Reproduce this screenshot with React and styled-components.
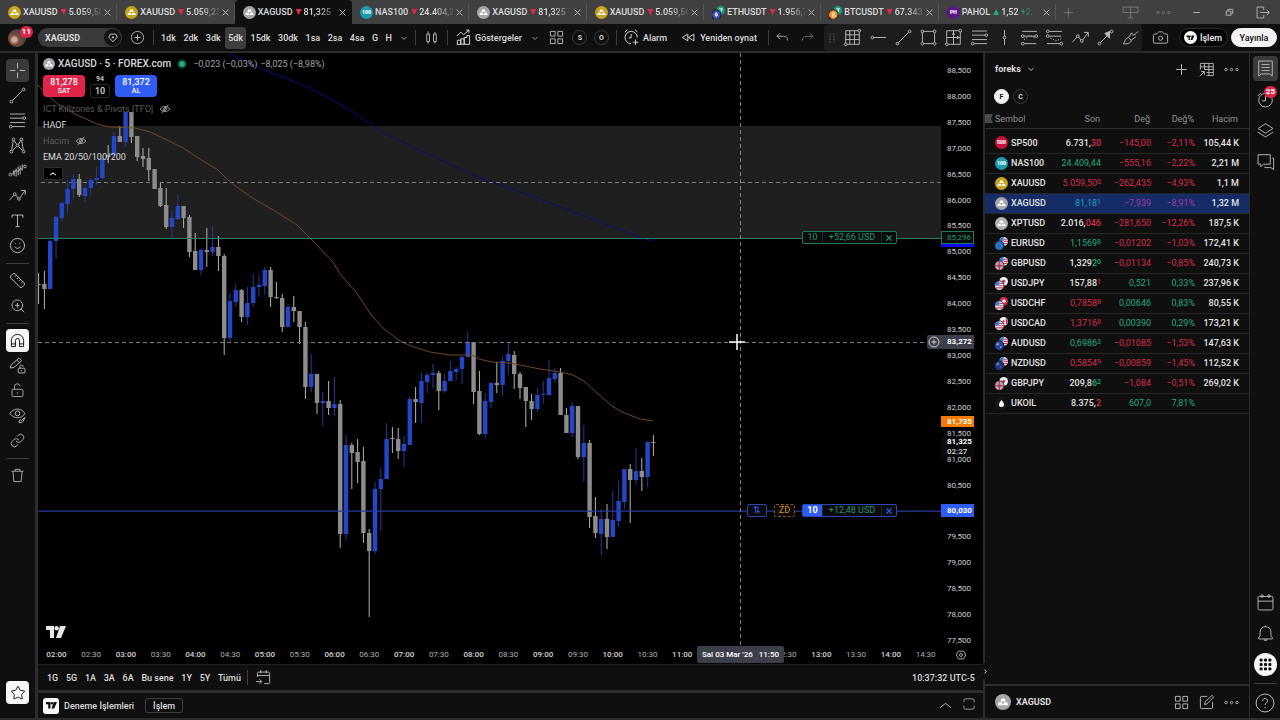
import React from 'react'
import styled, { createGlobalStyle } from 'styled-components'
import { Smile, Ruler, ZoomIn, Link, Star, Camera } from 'lucide-react'


const GlobalStyle = createGlobalStyle`
 * {
  box-sizing: border-box;
 }
 body {
  margin: 0;
  background-color: #2c2c2c;
  font-family: Roboto, "Noto Sans", sans-serif;
  font-size: 9px;
  line-height: 12px;
  color: #dbdbdb;
 }
 button {
  font: inherit;
  color: inherit;
  background: none;
  border: none;
  padding: 0;
  margin: 0;
  cursor: pointer;
 }
 svg {
  display: block;
  flex: none;
 }
`

const Page = styled.div`
 display: flex;
 flex-direction: column;
 height: 100vh;
 background-color: #2c2c2c;
`

/* ---------- browser style tabs ---------- */

const TabStrip = styled.div`
 display: flex;
 height: 24px;
 flex: none;
 background-color: #404040;
`
const Tabs = styled.div`
 display: grid;
 grid-template-columns: repeat(9, 1fr);
 flex: 0 0 82.5%;
`
const Tab = styled.div`
 display: flex;
 align-items: center;
 gap: 2px;
 min-width: 0;
 padding: 0 5px 0 8px;
 border-radius: 4px 4px 0 0;
 background-color: ${({ $active }) => ($active ? '#0f0f0f' : 'transparent')};
 background-image: ${({ $active }) => ($active ? 'none' : 'linear-gradient(#555, #555)')};
 background-size: 1px 16px;
 background-position: right center;
 background-repeat: no-repeat;
`
const TabName = styled.span`
 font-size: 9px;
 font-weight: 500;
`
const Triangle = styled.span`
 flex: none;
 width: 6px;
 height: 6px;
 margin: 0 0 0 1px;
 background-color: ${({ $up }) => ($up ? '#22ab7f' : '#e0284c')};
 clip-path: ${({ $up }) => ($up ? 'polygon(50% 0, 100% 100%, 0 100%)' : 'polygon(0 0, 100% 0, 50% 100%)')};
`
const TabPrice = styled.span`
 flex: 1;
 min-width: 0;
 overflow: hidden;
 white-space: nowrap;
 font-weight: 500;
 mask-image: linear-gradient(90deg, #000 40%, transparent 110%);
`
const WindowTools = styled.div`
 display: flex;
 flex: 1;
 align-items: center;
 justify-content: space-between;
 padding: 0 8px 0 3px;
 color: #a8a8a8;
`
const ToolCluster = styled.div`
 display: flex;
 align-items: center;
 gap: 14px;
`

/* ---------- top toolbar ---------- */

const Toolbar = styled.header`
 display: flex;
 height: 27px;
 flex: none;
 margin-bottom: 2px;
 background-color: #0f0f0f;
`
const Section = styled.div`
 display: flex;
 align-items: center;
 flex: none;
 width: ${({ $width }) => $width}px;
 padding: 0 ${({ $pad }) => $pad || 5}px;
 gap: ${({ $gap }) => $gap || 0}px;
 justify-content: ${({ $between }) => ($between ? 'space-between' : 'flex-start')};
 background-image: ${({ $line }) => ($line ? 'linear-gradient(#3d3d3d, #3d3d3d)' : 'none')};
 background-size: 1px 15px;
 background-position: left center;
 background-repeat: no-repeat;
`
const Avatar = styled.div`
 position: relative;
 width: 18px;
 height: 18px;
 margin: 0 12px 0 3px;
 border-radius: 50%;
 background: radial-gradient(circle at 35% 60%, #c9aa9c 0 14%, #7c4a3c 30%, #4b453e 60%, #6d4437 100%);
`
const Badge = styled.span`
 position: absolute;
 right: ${({ $right }) => $right}px;
 top: ${({ $top }) => $top}px;
 min-width: 12px;
 padding: 0 2px;
 border-radius: 6px;
 background-color: #e0244a;
 color: #fff;
 font-size: 8px;
 line-height: 12px;
 font-weight: 700;
 text-align: center;
`
const SymbolSearch = styled.button`
 display: flex;
 align-items: center;
 justify-content: space-between;
 width: 84px;
 height: 19px;
 padding: 0 1px 0 7px;
 margin-right: 6px;
 border-radius: 10px;
 background-color: #3a3a3a;
 font-weight: 700;
 text-align: left;
`
const Gem = styled.span`
 display: flex;
 align-items: center;
 justify-content: center;
 width: 17px;
 height: 17px;
 border-radius: 50%;
 background-color: #141414;
`
const Intervals = styled.div`
 display: flex;
 justify-content: space-between;
 width: 237px;
 margin-right: 4px;
`
const Interval = styled.button`
 height: 22px;
 padding: 0 3px;
 border-radius: 3px;
 font-weight: 500;
 background-color: ${({ $active }) => ($active ? '#3d3d3d' : 'transparent')};
`
const IconButton = styled.button`
 display: flex;
 align-items: center;
 justify-content: center;
 width: ${({ $size }) => $size || 19}px;
 height: ${({ $size }) => $size || 19}px;
 color: ${({ $dim }) => ($dim ? '#777' : '#b8b8b8')};
`
const LabelButton = styled.button`
 display: flex;
 align-items: center;
 gap: 2px;
 height: 19px;
 font-weight: 500;
 white-space: nowrap;
`
const Letter = styled.button`
 width: 15px;
 height: 15px;
 border-radius: 50%;
 border: 1px solid ${({ $solid }) => ($solid ? '#f2f2f2' : '#3d3d3d')};
 background-color: ${({ $solid }) => ($solid ? '#f2f2f2' : 'transparent')};
 color: ${({ $solid }) => ($solid ? '#0f0f0f' : '#dbdbdb')};
 font-size: 7px;
 line-height: 12px;
 font-weight: 700;
`
const Favorites = styled.div`
 display: flex;
 flex: 1;
 align-items: center;
 justify-content: space-between;
 min-width: 0;
 padding: 0 2px 0 3px;
 border-radius: 4px;
 background-color: #1c1c1c;
`
const Pill = styled.button`
 display: flex;
 align-items: center;
 justify-content: center;
 gap: 3px;
 width: ${({ $light }) => ($light ? 46 : 49)}px;
 height: 19px;
 border-radius: 10px;
 border: 1px solid ${({ $light }) => ($light ? '#f2f2f2' : '#2e2e2e')};
 background-color: ${({ $light }) => ($light ? '#f2f2f2' : '#000')};
 color: ${({ $light }) => ($light ? '#0f0f0f' : '#f2f2f2')};
 font-weight: 500;
`

/* ---------- body ---------- */

const Body = styled.div`
 display: grid;
 grid-template-columns: 35px minmax(0, 1fr) 265px 30px;
 flex: 1;
 min-height: 0;
 padding-bottom: 2px;
`
const Rail = styled.nav`
 display: flex;
 flex-direction: column;
 align-items: center;
 padding: ${({ $right }) => ($right ? '0' : '5px 0 13px')};
 background-color: #0f0f0f;
`
const RailButton = styled.button`
 position: relative;
 display: flex;
 align-items: center;
 justify-content: center;
 width: ${({ $tall }) => ($tall ? 30 : 35)}px;
 height: ${({ $tall }) => ($tall ? 31 : 25)}px;
 flex: none;
 color: ${({ $look }) => ($look === 'light' ? '#0f0f0f' : '#b8b8b8')};
`
const RailFace = styled.span`
 display: flex;
 align-items: center;
 justify-content: center;
 width: ${({ $wide }) => ($wide ? 25 : 23)}px;
 height: ${({ $wide }) => ($wide ? 25 : 23)}px;
 border-radius: ${({ $round }) => ($round ? '50%' : '4px')};
 background-color: ${({ $look }) => ({ light: '#f7f7f7', dark: '#3a3a3a' }[$look] || 'transparent')};
`
const RailLine = styled.div`
 width: 23px;
 height: 1px;
 margin: ${({ $tight }) => ($tight ? '3px 0' : '5px 0 4px')};
 flex: none;
 background-color: #3d3d3d;
`
const Spacer = styled.div`
 flex: 1;
`

const ChartColumn = styled.main`
 display: flex;
 flex-direction: column;
 margin: 0 2px 0 3px;
 min-width: 0;
`
const ChartGrid = styled.section`
 display: grid;
 grid-template-columns: minmax(0, 1fr) 42px;
 grid-template-rows: minmax(0, 1fr) 18px;
 flex: 1;
 min-height: 0;
 background-color: #000;
`
const Pane = styled.div`
 position: relative;
 min-width: 0;
 overflow: hidden;
`
const PaneSvg = styled.svg`
 position: absolute;
 inset: 0;
 width: 100%;
 height: 100%;
`
const Legend = styled.div`
 position: relative;
 display: flex;
 flex-direction: column;
 align-items: flex-start;
 padding: 4px 5px;
`
const LegendTitle = styled.div`
 display: flex;
 align-items: center;
 gap: 3px;
 height: 14px;
 font-size: 10px;
 line-height: 14px;
 font-weight: 500;
 white-space: nowrap;
`
const LiveDot = styled.span`
 width: 6px;
 height: 6px;
 margin: 0 5px;
 border-radius: 50%;
 background-color: #22ab7f;
 box-shadow: 0 0 0 2px #0d3327;
`
const Change = styled.span`
 font-size: 9px;
 font-weight: 400;
 color: #a3a3a3;
`
const Quote = styled.div`
 display: flex;
 gap: 5px;
 margin: 4px 0 3px;
`
const Trade = styled.button`
 width: 42px;
 height: 22px;
 border-radius: 4px;
 background-color: ${({ $buy }) => ($buy ? '#2f5cf2' : '#e0244a')};
 color: #fff;
 font-weight: 500;
 line-height: 10px;
`
const Small = styled.span`
 display: block;
 font-size: 7px;
 line-height: 9px;
`
const Lot = styled.div`
 display: flex;
 flex-direction: column;
 align-items: center;
 justify-content: space-between;
 width: 20px;
 font-weight: 500;
`
const LotBox = styled.button`
 width: 20px;
 height: 14px;
 border: 1px solid #2b2b2b;
 border-radius: 3px;
 background-color: #000;
`
const Study = styled.div`
 display: flex;
 align-items: center;
 gap: 6px;
 height: 16px;
 color: ${({ $hidden }) => ($hidden ? '#5c5c5c' : '#dbdbdb')};
`
const EyeOff = styled.button`
 color: #a8a8a8;
`
const Fold = styled.button`
 display: flex;
 align-items: center;
 justify-content: center;
 width: 20px;
 height: 13px;
 margin-top: 2px;
 border: 1px solid #2b2b2b;
 border-radius: 2px;
 background-color: #000;
`
const Order = styled.div`
 position: absolute;
 right: 44px;
 top: ${({ $top }) => $top}px;
 display: flex;
 gap: 7px;
 height: 13px;
 line-height: 11px;
`
const OrderBox = styled.div`
 display: flex;
 border: 1px ${({ $dashed }) => ($dashed ? 'dashed' : 'solid')} ${({ $color }) => $color};
 border-radius: 2px;
 background-color: #0b0b0b;
`
const OrderCell = styled.span`
 display: flex;
 align-items: center;
 justify-content: center;
 width: ${({ $width }) => $width}px;
 color: ${({ $color }) => $color};
 background-color: ${({ $fill }) => $fill || 'transparent'};
 font-weight: ${({ $fill }) => ($fill ? 700 : 400)};
 & + & {
  border-left: 1px solid #1b2633;
 }
`
const LogoMark = styled.div`
 position: absolute;
 left: 8px;
 bottom: 8px;
 color: #e6e6e6;
`
const PriceAxis = styled.div`
 position: relative;
 display: flex;
 flex-direction: column;
 justify-content: space-between;
 margin-bottom: -1px;
 padding: 12px 0 0 6px;
 font-size: 8px;
 color: #d0d0d0;
`
const Tag = styled.div`
 position: absolute;
 left: 0;
 top: ${({ $top }) => $top}px;
 width: 33px;
 padding-left: 6px;
 font-weight: ${({ $thin }) => ($thin ? 400 : 700)};
 line-height: ${({ $line }) => $line || 13}px;
 color: ${({ $color }) => $color || '#fff'};
 background-color: ${({ $fill }) => $fill};
 box-shadow: ${({ $ring }) => ($ring ? `inset 0 0 0 1px ${$ring}` : 'none')};
`
const AddAlert = styled.button`
 position: absolute;
 left: -14px;
 top: 282px;
 display: flex;
 align-items: center;
 justify-content: center;
 width: 14px;
 height: 14px;
 border-radius: 2px 0 0 2px;
 background-color: #3c3e49;
`
const TimeAxis = styled.div`
 position: relative;
 display: grid;
 grid-template-columns: repeat(26, 1fr);
 align-items: center;
 margin-right: -2px;
 padding-left: 1px;
 font-size: 8px;
 text-align: center;
`
const Hour = styled.span`
 color: ${({ $half }) => ($half ? '#b0b0b0' : '#d4d4d4')};
 font-weight: ${({ $half }) => ($half ? 400 : 500)};
`
const TimeTag = styled.div`
 position: absolute;
 left: 659px;
 top: 0;
 width: 87px;
 border-radius: 2px;
 background-color: #3c3e49;
 color: #fff;
 font-weight: 500;
 line-height: 17px;
 white-space: pre;
`
const Corner = styled.div`
 display: flex;
 align-items: center;
 padding-left: 14px;
 color: #c2c2c2;
`
const Bar = styled.div`
 display: flex;
 align-items: center;
 flex: none;
 height: ${({ $height }) => $height}px;
 padding: 0 ${({ $right }) => $right}px 0 ${({ $left }) => $left}px;
 margin-bottom: ${({ $gap }) => $gap || 0}px;
 border-top: ${({ $gap }) => ($gap ? '1px solid #1f1f1f' : 'none')};
 background-color: #0f0f0f;
 font-weight: 500;
`
const Ranges = styled.div`
 display: flex;
 justify-content: space-between;
 width: 194px;
 margin-right: 6px;
`
const Divider = styled.div`
 width: 1px;
 height: 15px;
 margin-right: 6px;
 background-color: #3d3d3d;
`
const Broker = styled.span`
 display: flex;
 align-items: center;
 justify-content: center;
 width: 16px;
 height: 16px;
 margin-right: 5px;
 border-radius: 3px;
 background-color: #f7f7f7;
 color: #0f0f0f;
`
const Outline = styled.button`
 width: 38px;
 height: 15px;
 margin-left: 11px;
 border: 1px solid #3d3d3d;
 border-radius: 3px;
 line-height: 12px;
`

/* ---------- watchlist ---------- */

const Side = styled.aside`
 position: relative;
 display: flex;
 flex-direction: column;
 min-width: 0;
 border-right: 1px solid #2c2c2c;
 background-color: #0f0f0f;
`
const SideHead = styled.div`
 display: flex;
 align-items: center;
 justify-content: space-between;
 height: 32px;
 padding: 0 8px 0 10px;
`
const SideTitle = styled.button`
 display: flex;
 align-items: center;
 gap: 4px;
 font-weight: 700;
`
const IconRow = styled.div`
 display: flex;
 gap: 6px;
`
const Lists = styled.div`
 display: flex;
 gap: 4px;
 padding: 4px 0 6px 9px;
`
const Table = styled.table`
 width: 100%;
 border-collapse: collapse;
 table-layout: fixed;
`
const Th = styled.th`
 height: 18px;
 padding: 0 ${({ $last }) => ($last ? 11 : 1)}px 0 0;
 font-weight: 400;
 text-align: right;
 color: #8f8f8f;
 width: ${({ $width }) => $width}px;
 border-bottom: 1px solid #2c2c2c;
 &:first-child {
  text-align: left;
 }
`
const ThSymbol = styled.span`
 display: flex;
 align-items: center;
 gap: 2px;
`
const Gap = styled.tr`
 height: 5px;
`
const Row = styled.tr`
 height: 20px;
 background-color: ${({ $active }) => ($active ? '#152c66' : 'transparent')};
`
const Td = styled.td`
 padding: 0 ${({ $last }) => ($last ? 10 : 0)}px 0 0;
 text-align: right;
 font-weight: ${({ $bold }) => ($bold ? 500 : 400)};
 color: ${({ $color }) => $color || '#e3e3e3'};
 border-bottom: 1px solid #262626;
 white-space: nowrap;
`
const SymbolCell = styled.div`
 display: flex;
 align-items: center;
 gap: 3px;
 padding-left: 10px;
 font-weight: 500;
`
const Tail = styled.span`
 color: ${({ $color }) => $color};
`
const Pip = styled.sup`
 font-size: 7px;
 line-height: 7px;
 vertical-align: 2px;
 color: ${({ $color }) => $color};
`
const Detail = styled.div`
 display: flex;
 align-items: center;
 justify-content: space-between;
 height: 32px;
 margin-top: auto;
 padding: 0 8px 0 10px;
 background-color: #0f0f0f;
 box-shadow: 0 -2px 0 #2c2c2c;
`
const DetailName = styled.div`
 display: flex;
 align-items: center;
 gap: 5px;
 font-weight: 700;
`
const Handle = styled.button`
 position: absolute;
 left: -2px;
 top: 610px;
 display: flex;
 align-items: center;
 width: 5px;
 height: 16px;
 border-radius: 0 3px 3px 0;
 background-color: #0f0f0f;
`

/* ---------- icons, all drawn on a 28 unit grid ---------- */

const Icon = ({ size = 19, children }) => (
    <svg width={size} height={size} viewBox="0 0 28 28" fill="none" stroke="currentColor" strokeWidth="1.4">
        {children}
    </svg>
)

const dot = (x, y, r = 2) => <circle key={`${x}-${y}`} cx={x} cy={y} r={r} />

const icons = {
    cross: <path d="M14 3v8M14 17v8M3 14h8M17 14h8" />,
    line: <>{dot(5, 23)}{dot(23, 5)}<path d="M6.5 21.5l15-15" /></>,
    fib: <>{dot(24, 10.5)}{dot(4, 23)}<path d="M3 4.5h22M3 10.5h19M3 17h22M6 23h19" /></>,
    pattern: <>{dot(5, 23)}{dot(8, 5)}{dot(14, 14)}{dot(20, 5)}{dot(23, 23)}
        <path d="M5.4 21L7.7 7M9.2 6.7l3.6 5.6M15.2 12.3l3.6-5.6M20.3 7l2.3 14M6.5 21.6l6-6M15.5 15.5l6 6" /></>,
    forecast: <>{dot(3.5, 20)}{dot(25, 8)}<path d="M6 19h2v-5M9 14v8M12 11v12M15 8v13M18 7v13M21 5v9M9 17l3-4 3 3 3-5 3 1" /></>,
    zigzag: <>{dot(10, 12)}{dot(16, 19)}<path d="M2 21l6.7-7.5M11.5 13.5l3 4M17.5 17.5L25 7M19 6.5h6.5V13" /></>,
    text: <path d="M6 10V6h16v4M14 6v17M11 23h6" />,
    magnet: <path d="M5 23v-9a9 9 0 0 1 18 0v9h-6v-9a3 3 0 0 0-6 0v9zM5 19h6M17 19h6" />,
    penLock: <><path d="M3.5 17.5l1-4L16 3l4 4L8.5 17zM13 6l4 4" /><rect x="15" y="18" width="10" height="7" rx="1" /><path d="M17.5 18v-2a2.5 2.5 0 0 1 5 0M20 21v1.5" /></>,
    lock: <><rect x="5" y="12" width="18" height="12" rx="2" /><path d="M9 12V8a4.5 4.5 0 0 1 9-1M14 17v2.5" /></>,
    eyeBrush: <><path d="M3 11c5-8.5 17-8.5 22 0-5 8.5-17 8.5-22 0z" /><circle cx="14" cy="11" r="3.5" /><path d="M16 24c0-3 2-4 4-3l5-4-3 6c-1 2-4 2-6 1z" /></>,
    trash: <path d="M4 7h20M10 7V4h8v3M6.5 7l1.5 17h12l1.5-17" />,
    plusCircle: <><circle cx="14" cy="14" r="9" /><path d="M14 9.5v9M9.5 14h9" /></>,
    chevron: <path d="M8 11.5l6 6 6-6" strokeWidth="1.8" />,
    chevronUp: <path d="M4 18l10-8 10 8" strokeWidth="1.8" />,
    foldUp: <path d="M4 18l10-8 10 8" strokeWidth="4" />,
    chevronRight: <path d="M8 4l12 10L8 24" strokeWidth="5" />,
    candles: <path d="M7 9h4v11H7zM9 5v4M9 20v3M17 9h4v11h-4zM19 6v3M19 20v3" />,
    indicators: <path d="M4 12l6-6 4 4 8-7M18 3h4v4M5 24v-6h5v6M10 24v-8h5v8M15 24v-10h4v-3h4v13H4" />,
    grid4: <path d="M5 5h7v7H5zM16 5h7v7h-7zM5 16h7v7H5zM16 16h7v7h-7z" strokeLinejoin="round" />,
    alarmAdd: <><path d="M22.5 14A9 9 0 1 0 13 23M13.5 9v5.5H10M4 6l4-3.5M19 2.5l4 3.5M20 17v8M16 21h8" /></>,
    rewind: <path d="M13 9v10l-8-5zM22 9v10l-8-5z" />,
    undo: <path d="M10 7l-5 5 5 5M5 12h11c4 0 6 2 6.5 7" />,
    redo: <path d="M18 7l5 5-5 5M23 12H12c-4 0-6 2-6.5 7" />,
    grip: <path d="M8 5h3M17 5h3M8 11h3M17 11h3M8 17h3M17 17h3M8 23h3M17 23h3" strokeWidth="2" />,
    fGrid: <>{dot(24, 4)}{dot(4, 24)}<path d="M4 22V4h18M24 6v18H6M10 4v20M17 4v20M4 10h20M4 17h20" /></>,
    fRay: <>{dot(5, 14)}<path d="M7 14h18" /></>,
    fRect: <>{dot(5, 5)}{dot(23, 5)}{dot(5, 23)}{dot(23, 23)}<path d="M7 5h14M7 23h14M5 7v14M23 7v14" /></>,
    fRange: <>{dot(24, 4)}{dot(4, 24)}<path d="M4 22V4h18M24 6v18H6M14 4v20M4 14h20M14 7l-2 3M14 7l2 3M22 14l-3-2M22 14l-3 2" /></>,
    fVert: <>{dot(14, 14)}<path d="M14 3v9M14 16v9" /></>,
    fLong: <>{dot(4, 12)}{dot(24, 12)}{dot(4, 23)}<path d="M3 5h22M6 12h16M6 23h18" /><path d="M6 17l8-6 8 3" strokeDasharray="2 2" /></>,
    fShort: <>{dot(4, 5)}{dot(4, 12)}{dot(24, 23)}<path d="M6 5h19M6 12h18M3 23h19" /><path d="M8 15l8 4 8-3" strokeDasharray="2 2" /></>,
    fArrow: <>{dot(5, 23)}{dot(23, 5)}<path d="M6.5 21.5l12-12" /><path d="M20 5l-7 3 7 7z" fill="currentColor" /></>,
    fBrush: <path d="M3 23c3 0 2-8 8-9l4 4c0 5-7 6-12 5zM11 14l5-7c1 5 3 5 9-2M15 18l7-5" />,
    layout: <><rect x="3" y="6" width="22" height="8" /><path d="M14 6v16M10 22h8" /></>,
    dots: <>{dot(5, 14)}{dot(14, 14)}{dot(23, 14)}</>,
    plus: <path d="M14 6v16M6 14h16" />,
    minus: <path d="M7 14h14" strokeWidth="2" />,
    restore: <path d="M7 11h10v9H7zM11 11V7h10v9h-4" strokeWidth="2" />,
    exit: <path d="M16 10V5H5v18h11v-5M10 14h15M21 9.5l4.5 4.5-4.5 4.5" />,
    close: <path d="M5 5l18 18M23 5L5 23" strokeWidth="3" />,
    cancel: <path d="M7 7l14 14M21 7L7 21" strokeWidth="3" />,
    gem: <path d="M8 5h12l4 7-10 11L4 12zM14 10v5M11.5 12.5h5" strokeWidth="2" />,
    eyeOff: <><path d="M3 14c5-8 17-8 22 0-5 8-17 8-22 0zM22 4L6 24" strokeWidth="2" /><circle cx="14" cy="14" r="3.5" strokeWidth="2" /></>,
    hexagon: <><path d="M8 5h12l5 9-5 9H8l-5-9z" strokeWidth="2" /><circle cx="14" cy="14" r="3.5" strokeWidth="2" /></>,
    goTo: <path d="M5 13V8q0-2 2-2h14q2 0 2 2v13q0 2-2 2h-6M5 11h18M10 3v5M18 3v5M3 20h8M8 16.5l3.5 3.5L8 23.5" />,
    expand: <path d="M5 11V8q0-3 3-3h12q3 0 3 3v3M5 17v3q0 3 3 3h12q3 0 3-3v-3" />,
    tableAdd: <path d="M5 14V5h19v18H14M5 10h19M11 5v9M17.5 5v18M11 14h13M14 18.5h10M4 24l7-7M6 17h5v5" />,
    edit: <path d="M15 5H7q-2 0-2 2v14q0 2 2 2h14q2 0 2-2v-8M11 17l1-4L22 3.5l2.5 2.5L15 16z" />,
    list: <path d="M4 3h20v22l-4-3h-12l-4 3zM8 8h12M8 12.5h12M8 17h12" />,
    alarm: <><circle cx="14" cy="15" r="10" /><path d="M14 9v7H9M2.5 9l5-5" /></>,
    layers: <path d="M3 11l11-7 11 7-11 7zM3 16.5l11 7 11-7" />,
    chat: <path d="M3 4h18v14H11l-4 4v-4H3zM24 9h2v17l-4-3h-9v-1.5" />,
    calendar: <><rect x="3" y="5" width="22" height="20" rx="2" /><path d="M3 12h22" /><circle cx="9" cy="4.5" r="1.8" /><circle cx="19" cy="4.5" r="1.8" /></>,
    bell: <path d="M4 22h20v-2l-2-3v-5c0-5-3-8-8-8s-8 3-8 8v5l-2 3zM12 22v2h4v-2M14 4V2" />,
    apps: <path d="M6 6h3v3H6zM12.5 6h3v3h-3zM19 6h3v3h-3zM6 12.5h3v3H6zM12.5 12.5h3v3h-3zM19 12.5h3v3h-3zM6 19h3v3H6zM12.5 19h3v3h-3zM19 19h3v3h-3z" fill="currentColor" />,
    help: <><circle cx="14" cy="14" r="12.5" /><path d="M10.5 11.5c0-5 7-5 7-.5 0 3-3.5 3-3.5 6M14 19.5v2" /></>,
}

const TvLogo = ({ width = 20 }) => (
    <svg width={width} height={width * 0.6} viewBox="0 0 20 12" fill="currentColor">
        <path d="M0 0h8v12H4V4H0zM14 0h6l-5 12h-5z" />
        <circle cx="10.6" cy="2.2" r="2.2" />
    </svg>
)

const coins = { gold: '#c9a21c', silver: '#a5a6aa', plat: '#b4b4b0' }

const Ingots = ({ kind, size = 13 }) => (
    <svg width={size} height={size} viewBox="0 0 18 18">
        <circle cx="9" cy="9" r="9" fill={coins[kind]} />
        <path d="M7.3 5h3.4l1.3 3.4H6zM4.3 9.2h3.4L9 12.6H3zM10.3 9.2h3.4l1.3 3.4H9z" fill="#fff" />
    </svg>
)

const NumberCoin = ({ color, text }) => (
    <svg width="13" height="13" viewBox="0 0 18 18">
        <circle cx="9" cy="9" r="9" fill={color} />
        <text x="9" y="11.3" textAnchor="middle" fontSize="7" fontWeight="900" fill="#fff">{text}</text>
    </svg>
)

const flags = {
    us: (x, y) => <><circle cx={x} cy={y} r="6" fill="#f0f0f0" /><path d={`M${x - 5} ${y + 3}h10M${x} ${y - 3}h5M${x} ${y}h6`} stroke="#d8345a" strokeWidth="1.5" /><path d={`M${x} ${y - 6}v6h-6a6 6 0 0 1 6-6z`} fill="#3a7bd5" /></>,
    eu: (x, y) => <><circle cx={x} cy={y} r="6" fill="#1f6fc4" /><circle cx={x} cy={y} r="3" fill="none" stroke="#5f9d8c" strokeDasharray="1 1" /></>,
    gb: (x, y) => <><circle cx={x} cy={y} r="6" fill="#c9b3c6" /><path d={`M${x - 6} ${y}h12M${x} ${y - 6}v12`} stroke="#c8324f" strokeWidth="2" /><path d={`M${x - 4} ${y - 4}l8 8M${x + 4} ${y - 4}l-8 8`} stroke="#4a64a0" strokeWidth="0.6" /></>,
    jp: (x, y) => <><circle cx={x} cy={y} r="6" fill="#f0f0f0" /><circle cx={x} cy={y} r="2.2" fill="#d8345a" /></>,
    ch: (x, y) => <><circle cx={x} cy={y} r="6" fill="#d42a4a" /><path d={`M${x - 3} ${y}h6M${x} ${y - 3}v6`} stroke="#fff" strokeWidth="2" /></>,
    ca: (x, y) => <><circle cx={x} cy={y} r="6" fill="#f0f0f0" /><path d={`M${x + 3} ${y - 5}a6 6 0 0 1 0 10z`} fill="#d42a4a" /><circle cx={x} cy={y} r="1.5" fill="#d42a4a" /></>,
    au: (x, y) => <><circle cx={x} cy={y} r="6" fill="#2546a0" /><path d={`M${x - 5} ${y - 2}h5M${x - 2} ${y - 5}v5`} stroke="#d8a0b0" /><circle cx={x + 2} cy={y + 2} r="1" fill="#fff" /></>,
    nz: (x, y) => <><circle cx={x} cy={y} r="6" fill="#1c3686" /><path d={`M${x - 5} ${y - 2}h5M${x - 2} ${y - 5}v5`} stroke="#c890a4" /><circle cx={x + 2} cy={y + 2} r="1" fill="#e05070" /></>,
    tether: (x, y) => <><circle cx={x} cy={y} r="6" fill="#1f9d83" /><path d={`M${x - 2} ${y - 2}h5M${x + 1} ${y - 2}v4`} stroke="#fff" strokeWidth="1.3" /></>,
    eth: (x, y) => <><circle cx={x} cy={y} r="6" fill="#3b4bb0" /><path d={`M${x} ${y - 4}l2.5 4-2.5 4-2.5-4z`} fill="#dfe3ff" /></>,
    btc: (x, y) => <><circle cx={x} cy={y} r="6" fill="#f08a24" /><path d={`M${x - 1.5} ${y - 3}v6h2.5a1.5 1.5 0 0 0 0-3h-2.5h2a1.5 1.5 0 0 0 0-3z`} fill="none" stroke="#fff" /></>,
}

const Pair = ({ base, quote }) => (
    <svg width="13" height="13" viewBox="0 0 18 18">
        {flags[quote](12, 6)}
        <circle cx="6" cy="12" r="7" fill="#0f0f0f" />
        {flags[base](6, 12)}
    </svg>
)

const Drop = () => (
    <svg width="13" height="13" viewBox="0 0 18 18">
        <circle cx="9" cy="9" r="9" fill="#161616" />
        <path d="M9 4c3 4 3.5 5 3.5 6.5a3.5 3.5 0 0 1-7 0C5.5 9 6 8 9 4z" fill="#fff" />
    </svg>
)

const logos = {
    XAUUSD: <Ingots kind="gold" />,
    XAGUSD: <Ingots kind="silver" />,
    XPTUSD: <Ingots kind="plat" />,
    NAS100: <NumberCoin color="#1a9db0" text="100" />,
    SP500: <NumberCoin color="#c8103c" text="500" />,
    PAHOL: <NumberCoin color="#5c1488" text="PH" />,
    ETHUSDT: <Pair base="eth" quote="tether" />,
    BTCUSDT: <Pair base="btc" quote="tether" />,
    EURUSD: <Pair base="eu" quote="us" />,
    GBPUSD: <Pair base="gb" quote="us" />,
    USDJPY: <Pair base="us" quote="jp" />,
    USDCHF: <Pair base="us" quote="ch" />,
    USDCAD: <Pair base="us" quote="ca" />,
    AUDUSD: <Pair base="au" quote="us" />,
    NZDUSD: <Pair base="nz" quote="us" />,
    GBPJPY: <Pair base="gb" quote="jp" />,
    UKOIL: <Drop />,
}

/* ---------- data ---------- */

const UP = '#22ab7f'
const DOWN = '#d92b4f'

const tabs = [
    ['XAUUSD', '5.059,50'],
    ['XAUUSD', '5.059,23'],
    ['XAGUSD', '81,325', true],
    ['NAS100', '24.404,2'],
    ['XAGUSD', '81,325'],
    ['XAUUSD', '5.059,50'],
    ['ETHUSDT', '1.956,7'],
    ['BTCUSDT', '67.343,'],
    ['PAHOL', '1,52'],
]

const intervals = ['1dk', '2dk', '3dk', '5dk', '15dk', '30dk', '1sa', '2sa', '4sa', 'G', 'H']
const ranges = ['1G', '5G', '1A', '3A', '6A', 'Bu sene', '1Y', '5Y', 'Tümü']
const favorites = ['fGrid', 'fRay', 'line', 'fRect', 'fRange', 'fib', 'fVert', 'fLong', 'fShort', 'zigzag', 'fArrow', 'fBrush']

// symbol, last price as [head, tail, pip, head colour, tail colour], change, change %, volume
const quotes = [
    ['SP500', ['6.731,', '30', '', null, DOWN], '−145,00', '−2,11%', '105,44 K'],
    ['NAS100', ['24.409,44', '', '', UP, UP], '−555,16', '−2,22%', '2,21 M'],
    ['XAUUSD', ['5.059,50', '', '0', DOWN, DOWN], '−262,435', '−4,93%', '1,1 M'],
    ['XAGUSD', ['81,18', '', '1', '#1fa3b8', '#1fa3b8'], '−7,939', '−8,91%', '1,32 M'],
    ['XPTUSD', ['2.016,', '046', '', null, DOWN], '−281,650', '−12,26%', '187,5 K'],
    ['EURUSD', ['1,1569', '', '8', UP, UP], '−0,01202', '−1,03%', '172,41 K'],
    ['GBPUSD', ['1,329', '2', '0', null, UP], '−0,01134', '−0,85%', '240,73 K'],
    ['USDJPY', ['157,88', '', '1', null, DOWN], '0,521', '0,33%', '237,96 K'],
    ['USDCHF', ['0,7858', '', '8', DOWN, DOWN], '0,00646', '0,83%', '80,55 K'],
    ['USDCAD', ['1,3716', '', '8', DOWN, DOWN], '0,00390', '0,29%', '173,21 K'],
    ['AUDUSD', ['0,6986', '', '3', UP, UP], '−0,01085', '−1,53%', '147,63 K'],
    ['NZDUSD', ['0,5854', '', '9', DOWN, DOWN], '−0,00859', '−1,45%', '112,52 K'],
    ['GBPJPY', ['209,8', '6', '2', null, UP], '−1,084', '−0,51%', '269,02 K'],
    ['UKOIL', ['8.375,', '2', '', null, DOWN], '607,0', '7,81%', ''],
]

// one bar per five minutes: rising?, high, body top, body bottom, low
const bars = [
    [0, 273, 284, 285, 304], [0, 271, 284, 289, 309], [1, 240, 241, 289, 289], [1, 216, 217, 241, 259],
    [1, 202, 203, 218, 221], [1, 181, 189, 204, 213], [1, 174, 179, 189, 199], [0, 174, 179, 195, 197],
    [1, 184, 188, 196, 202], [1, 178, 180, 188, 196], [1, 167, 178, 180, 185], [1, 156, 158, 178, 180],
    [0, 145, 155, 157, 163], [1, 132, 136, 155, 158], [0, 126, 136, 142, 142], [1, 112, 112, 142, 147],
    [0, 112, 112, 137, 143], [0, 136, 136, 157, 161], [0, 148, 156, 159, 167], [0, 148, 158, 170, 181],
    [0, 169, 169, 189, 189], [0, 183, 188, 206, 207], [0, 188, 205, 227, 229], [1, 210, 218, 227, 238],
    [1, 195, 206, 219, 220], [0, 206, 206, 218, 228], [0, 215, 217, 252, 257], [0, 233, 251, 270, 270],
    [1, 249, 250, 270, 275], [0, 228, 250, 252, 267], [1, 226, 247, 252, 256], [0, 236, 247, 256, 271],
    [0, 254, 256, 338, 355], [1, 293, 301, 338, 341], [1, 284, 290, 302, 307], [0, 289, 290, 317, 322],
    [1, 287, 303, 317, 325], [1, 274, 287, 303, 307], [1, 275, 285, 287, 297], [1, 267, 270, 286, 295],
    [0, 267, 270, 297, 307], [0, 282, 297, 298, 299], [0, 294, 298, 327, 332], [1, 304, 307, 327, 327],
    [0, 296, 307, 311, 322], [0, 311, 311, 327, 344], [0, 322, 327, 387, 399], [1, 354, 374, 387, 392],
    [0, 374, 374, 403, 414], [1, 392, 401, 403, 426], [0, 381, 401, 408, 415], [1, 377, 404, 408, 416],
    [0, 400, 404, 534, 548], [1, 435, 445, 534, 540], [0, 443, 445, 453, 489], [0, 439, 452, 462, 483],
    [0, 447, 461, 533, 543], [0, 529, 533, 551, 617], [1, 482, 489, 551, 554], [1, 468, 479, 489, 531],
    [1, 423, 439, 479, 479], [0, 427, 438, 439, 453], [0, 428, 439, 451, 459], [1, 436, 444, 451, 467],
    [1, 397, 399, 445, 445], [0, 387, 399, 402, 423], [1, 373, 381, 403, 423], [1, 373, 375, 382, 393],
    [1, 364, 373, 375, 388], [0, 371, 373, 391, 410], [1, 374, 381, 391, 393], [1, 361, 371, 381, 381],
    [1, 367, 369, 372, 380], [1, 356, 357, 369, 384], [1, 332, 342, 357, 357], [0, 342, 342, 392, 404],
    [0, 371, 391, 434, 435], [1, 393, 401, 434, 438], [1, 382, 383, 402, 408], [0, 362, 383, 385, 393],
    [1, 356, 361, 385, 396], [1, 343, 354, 361, 375], [0, 351, 355, 374, 389], [0, 372, 374, 388, 399],
    [0, 387, 387, 401, 427], [0, 394, 401, 409, 420], [1, 388, 395, 409, 412], [1, 381, 394, 395, 404],
    [1, 360, 378, 395, 395], [1, 368, 373, 379, 382], [0, 368, 373, 415, 415], [0, 408, 415, 433, 433],
    [1, 402, 406, 433, 437], [0, 406, 406, 457, 459], [1, 425, 443, 457, 482], [0, 440, 443, 517, 528],
    [0, 497, 516, 533, 538], [1, 509, 519, 534, 555], [0, 504, 519, 537, 549], [1, 491, 520, 537, 537],
    [1, 481, 501, 521, 527], [1, 469, 469, 502, 509], [0, 464, 469, 480, 523], [1, 448, 471, 480, 485],
    [0, 458, 471, 477, 491], [1, 441, 442, 477, 487], [0, 435, 442, 443, 456],
]
const STEP = 5.8

const ema50 = '38,85 45,93 58,104 75,114 97,124 110,127 135,128 150,132 165,139 183,148 200,159 218,170 230,182 241,190 254,199 275,211 297,225 310,238 333,262 340,274 356,292 372,316 383,328 400,341 411,346 430,352 450,355 472,355 479,359 492,362 510,363 525,366 540,369 560,372 573,375 584,381 597,393 612,406 622,412 640,419 653,421'
const ema200 = '228,53 267,71 310,88 350,110 383,133 430,155 480,178 540,199 600,222 645,239 653,241'

const prices = []
for (let p = 88500; p >= 77500; p -= 500) {
    prices.push(`${Math.floor(p / 1000)},${p % 1000 ? '500' : '000'}`)
}

const times = []
for (let m = 120; m <= 870; m += 30) {
    times.push(`${String(Math.floor(m / 60)).padStart(2, '0')}:${m % 60 ? '30' : '00'}`)
}
// the crosshair label sits on these two
const coveredTimes = ['11:30', '12:00']
// the order label sits on this one
const coveredPrice = '80,000'


const Candles = () => (
    <g>
        {bars.map(([rise, high, top, bottom, low], i) => {
            const x = 38.6 + i * STEP
            return (
                <g key={i} fill={rise ? '#2347c6' : '#8c8c8c'}>
                    <rect x={x - 0.5} y={high} width="1" height={low - high} fill={rise ? '#26389c' : '#b4b4ac'} />
                    <rect x={x - 2.2} y={top} width="4.4" height={bottom - top} />
                </g>
            )
        })}
    </g>
)

const Chart = () => (
    <ChartGrid>
        <Pane>
            <PaneSvg>
                <g transform="translate(-38 -53)">
                    <rect x="38" y="126" width="903" height="112" fill="#1f1f1f" />
                    <polyline points={ema200} fill="none" stroke="#0c0c78" />
                    <path d="M41 182.5h900" stroke="#7c7c7c" strokeDasharray="4 3" />
                    <Candles />
                    <polyline points={ema50} fill="none" stroke="#704628" />
                    <path d="M38 238.5h903" stroke="#2a8064" />
                    <path d="M38 511.2h903" stroke="#2a3a9c" strokeWidth="1.2" />
                    <path d="M38 342.5h903M740.5 53v593" stroke="#808080" strokeDasharray="4 3" />
                    <path d="M729 342h16M737 334v16" stroke="#fff" strokeWidth="1.5" />
                </g>
            </PaneSvg>
            <Legend>
                <LegendTitle>
                    <Ingots kind="silver" size={12} />
                    <span>XAGUSD · 5 · FOREX.com</span>
                    <LiveDot />
                    <Change>−0,023 (−0,03%)</Change>
                    <Change>−8,025 (−8,98%)</Change>
                </LegendTitle>
                <Quote>
                    <Trade>81,278<Small>SAT</Small></Trade>
                    <Lot><Small>94</Small><LotBox>10</LotBox></Lot>
                    <Trade $buy>81,372<Small>AL</Small></Trade>
                </Quote>
                <Study $hidden>ICT Killzones &amp; Pivots [TFO] <EyeOff aria-label="Göster"><Icon size={12}>{icons.eyeOff}</Icon></EyeOff></Study>
                <Study>HAOF</Study>
                <Study $hidden>Hacim <EyeOff aria-label="Göster"><Icon size={12}>{icons.eyeOff}</Icon></EyeOff></Study>
                <Study>EMA 20/50/100/200</Study>
                <Fold aria-label="Gizle"><Icon size={8}>{icons.foldUp}</Icon></Fold>
            </Legend>
            <Order $top={178}>
                <OrderBox $color="#1c7a5c">
                    <OrderCell $width={19} $color="#22946f">10</OrderCell>
                    <OrderCell $width={59} $color="#22946f">+52,66 USD</OrderCell>
                    <OrderCell $width={15} $color="#22946f"><Icon size={10}>{icons.cancel}</Icon></OrderCell>
                </OrderBox>
            </Order>
            <Order $top={451}>
                <OrderBox $color="#2a46b8"><OrderCell $width={18} $color="#2f5cf2">⇅</OrderCell></OrderBox>
                <OrderBox $color="#8a5a1c" $dashed><OrderCell $width={19} $color="#d98a2b">ZD</OrderCell></OrderBox>
                <OrderBox $color="#2a46b8">
                    <OrderCell $width={19} $color="#fff" $fill="#2f5cf2">10</OrderCell>
                    <OrderCell $width={59} $color="#22946f">+12,48 USD</OrderCell>
                    <OrderCell $width={15} $color="#2f5cf2"><Icon size={10}>{icons.cancel}</Icon></OrderCell>
                </OrderBox>
            </Order>
            <LogoMark><TvLogo /></LogoMark>
        </Pane>
        <PriceAxis>
            {prices.map((p) => <span key={p}>{p === coveredPrice ? '\u00a0' : p}</span>)}
            <Tag $top={181} $fill="#0a0af0">85,252</Tag>
            <Tag $top={178} $fill="#0b0b0b" $color="#22946f" $ring="#1c7a5c" $thin>85,296</Tag>
            <Tag $top={282} $line={14} $fill="#3c3e49">83,272</Tag>
            <AddAlert aria-label="Alarm ekle"><Icon size={14}><circle cx="14" cy="14" r="10" strokeWidth="2" /><path d="M14 9v10M9 14h10" strokeWidth="2" /></Icon></AddAlert>
            <Tag $top={363} $line={11} $fill="#f57c00">81,735</Tag>
            <Tag $top={384} $line={10} $fill="#0a0a0a">81,325<br /><Hour>02:27</Hour></Tag>
            <Tag $top={451} $fill="#2f5cf2">80,030</Tag>
        </PriceAxis>
        <TimeAxis>
            {times.map((t, i) => <Hour key={t} $half={i % 2 === 1}>{coveredTimes.includes(t) ? '' : t}</Hour>)}
            <TimeTag>{"Sal 03 Mar '26   11:50"}</TimeTag>
        </TimeAxis>
        <Corner><Icon size={12}>{icons.hexagon}</Icon></Corner>
    </ChartGrid>
)

const Watchlist = () => (
    <Side>
        <SideHead>
            <SideTitle>foreks <Icon size={12}>{icons.chevron}</Icon></SideTitle>
            <IconRow>
                <IconButton aria-label="Sembol ekle"><Icon>{icons.plus}</Icon></IconButton>
                <IconButton aria-label="Tablo"><Icon>{icons.tableAdd}</Icon></IconButton>
                <IconButton aria-label="Ayarlar"><Icon size={17}>{icons.dots}</Icon></IconButton>
            </IconRow>
        </SideHead>
        <Lists>
            <Letter $solid>F</Letter>
            <Letter>C</Letter>
        </Lists>
        <Table>
            <thead>
                <tr>
                    <Th>
                        <ThSymbol>
                            <svg width="8" height="9" viewBox="0 0 8 9"><path d="M0 0h8L6 4.5 8 9H0z" fill="#4a4a4a" /></svg>
                            Sembol
                        </ThSymbol>
                    </Th>
                    <Th $width={51}>Son</Th>
                    <Th $width={50}>Değ</Th>
                    <Th $width={44}>Değ%</Th>
                    <Th $width={54} $last>Hacim</Th>
                </tr>
            </thead>
            <tbody>
                <Gap />
                {quotes.map(([name, [head, tail, pip, headColor, tailColor], change, pct, volume]) => {
                    const active = name === 'XAGUSD'
                    const color = active ? '#a03aa0' : change.startsWith('−') ? DOWN : UP
                    return (
                        <Row key={name} $active={active}>
                            <Td><SymbolCell>{logos[name]}{name}</SymbolCell></Td>
                            <Td $bold={!headColor} $color={headColor}>
                                {head}<Tail $color={tailColor}>{tail}</Tail>
                                {pip && <Pip $color={tailColor}>{pip}</Pip>}
                            </Td>
                            <Td $color={color}>{change}</Td>
                            <Td $color={color}>{pct}</Td>
                            <Td $bold $last>{volume}</Td>
                        </Row>
                    )
                })}
            </tbody>
        </Table>
        <Detail>
            <DetailName><Ingots kind="silver" size={16} />XAGUSD</DetailName>
            <IconRow>
                <IconButton aria-label="Izgara"><Icon>{icons.grid4}</Icon></IconButton>
                <IconButton aria-label="Not"><Icon>{icons.edit}</Icon></IconButton>
                <IconButton aria-label="Diğer"><Icon size={17}>{icons.dots}</Icon></IconButton>
            </IconRow>
        </Detail>
        <Handle aria-label="Paneli kapat"><Icon size={5}>{icons.chevronRight}</Icon></Handle>
    </Side>
)

const Tool = ({ name, look, children }) => (
    <RailButton $look={look} aria-label={name}>
        <RailFace $look={look}>{children || <Icon>{icons[name]}</Icon>}</RailFace>
    </RailButton>
)

const RightTool = ({ name, look, round, badge }) => (
    <RailButton $tall $look={look} aria-label={name}>
        <RailFace $look={look} $wide={!round} $round={round}><Icon size={name === 'help' ? 20 : 19}>{icons[name]}</Icon></RailFace>
        {badge && <Badge $right={3} $top={2}>{badge}</Badge>}
    </RailButton>
)

const App = () => {
    return (
        <Page>
            <GlobalStyle />
            <TabStrip>
                <Tabs>
                    {tabs.map(([name, price, active], i) => (
                        <Tab key={i} $active={active}>
                            {logos[name]}
                            <TabName>{name}</TabName>
                            <Triangle $up={name === 'PAHOL'} />
                            <TabPrice>{price}{name === 'PAHOL' && <Tail $color={UP}> +2.</Tail>}</TabPrice>
                            <IconButton $size={9} aria-label="Kapat"><Icon size={9}>{icons.close}</Icon></IconButton>
                        </Tab>
                    ))}
                </Tabs>
                <WindowTools>
                    <IconButton $dim aria-label="Yeni sekme"><Icon size={17}>{icons.plus}</Icon></IconButton>
                    <ToolCluster>
                        <IconButton $dim aria-label="Düzen"><Icon>{icons.layout}</Icon></IconButton>
                        <IconButton $dim aria-label="Menü"><Icon size={17}>{icons.dots}</Icon></IconButton>
                        <IconButton aria-label="Küçült"><Icon size={13}>{icons.minus}</Icon></IconButton>
                        <IconButton aria-label="Geri yükle"><Icon size={13}>{icons.restore}</Icon></IconButton>
                        <IconButton aria-label="Çıkış"><Icon size={17}>{icons.exit}</Icon></IconButton>
                    </ToolCluster>
                </WindowTools>
            </TabStrip>

            <Toolbar>
                <Section $width={153}>
                    <Avatar><Badge $right={-7} $top={-3}>11</Badge></Avatar>
                    <SymbolSearch>XAGUSD<Gem><Icon size={12}>{icons.gem}</Icon></Gem></SymbolSearch>
                    <IconButton aria-label="Karşılaştır"><Icon>{icons.plusCircle}</Icon></IconButton>
                </Section>
                <Section $width={262} $line>
                    <Intervals>
                        {intervals.map((t) => <Interval key={t} $active={t === '5dk'}>{t}</Interval>)}
                    </Intervals>
                    <IconButton $size={10} aria-label="Aralıklar"><Icon size={12}>{icons.chevron}</Icon></IconButton>
                </Section>
                <Section $width={32} $line $pad={7}>
                    <IconButton aria-label="Mumlar"><Icon>{icons.candles}</Icon></IconButton>
                </Section>
                <Section $width={169} $line $pad={7} $between>
                    <LabelButton><Icon>{icons.indicators}</Icon>Göstergeler</LabelButton>
                    <IconButton $size={12} aria-label="Favoriler"><Icon size={12}>{icons.chevron}</Icon></IconButton>
                    <IconButton aria-label="Şablonlar"><Icon>{icons.grid4}</Icon></IconButton>
                    <Letter>S</Letter>
                    <Letter>O</Letter>
                </Section>
                <Section $width={152} $line $pad={6} $gap={12}>
                    <LabelButton><Icon>{icons.alarmAdd}</Icon>Alarm</LabelButton>
                    <LabelButton><Icon>{icons.rewind}</Icon>Yeniden oynat</LabelButton>
                </Section>
                <Section $width={56} $line $gap={6}>
                    <IconButton aria-label="Geri al"><Icon size={17}>{icons.undo}</Icon></IconButton>
                    <IconButton $dim aria-label="Yinele"><Icon size={17}>{icons.redo}</Icon></IconButton>
                </Section>
                <Favorites>
                    <IconButton $size={10} $dim aria-label="Taşı"><Icon size={12}>{icons.grip}</Icon></IconButton>
                    {favorites.map((f) => <IconButton key={f} aria-label={f}><Icon>{icons[f]}</Icon></IconButton>)}
                </Favorites>
                <Section $width={138} $pad={3} $between>
                    <IconButton $size={30} aria-label="Anlık görüntü"><Camera size={17} strokeWidth={1.3} /></IconButton>
                    <Pill>
                        <svg width="13" height="13" viewBox="0 0 20 20"><circle cx="10" cy="10" r="10" fill="#fff" /><path d="M4 7h5v7H7V9.5H4zM12.5 7H16l-3 7h-3z" fill="#000" /><circle cx="10.7" cy="8.2" r="1.2" fill="#000" /></svg>
                        İşlem
                    </Pill>
                    <Pill $light>Yayınla</Pill>
                </Section>
            </Toolbar>

            <Body>
                <Rail>
                    <Tool name="cross" look="dark" />
                    <Tool name="line" />
                    <Tool name="fib" />
                    <Tool name="pattern" />
                    <Tool name="forecast" />
                    <Tool name="zigzag" />
                    <Tool name="text" />
                    <Tool name="smile"><Smile size={17} strokeWidth={1.4} /></Tool>
                    <RailLine />
                    <Tool name="ruler"><Ruler size={17} strokeWidth={1.4} /></Tool>
                    <Tool name="zoom"><ZoomIn size={16} strokeWidth={1.4} /></Tool>
                    <RailLine />
                    <Tool name="magnet" look="light" />
                    <Tool name="penLock" />
                    <Tool name="lock"><Icon size={17}>{icons.lock}</Icon></Tool>
                    <Tool name="eyeBrush" />
                    <Tool name="link"><Link size={15} strokeWidth={1.5} /></Tool>
                    <RailLine />
                    <Tool name="trash"><Icon size={17}>{icons.trash}</Icon></Tool>
                    <Spacer />
                    <Tool name="star" look="light"><Star size={16} strokeWidth={1.4} /></Tool>
                </Rail>

                <ChartColumn>
                    <Chart />
                    <Bar $height={26} $left={9} $right={8} $gap={3}>
                        <Ranges>{ranges.map((r) => <button key={r}>{r}</button>)}</Ranges>
                        <Divider />
                        <IconButton aria-label="Tarihe git"><Icon>{icons.goTo}</Icon></IconButton>
                        <Spacer />
                        <button>10:37:32 UTC-5</button>
                    </Bar>
                    <Bar $height={25} $left={5} $right={6}>
                        <Broker><TvLogo width={11} /></Broker>
                        <span>Deneme İşlemleri</span>
                        <Outline>İşlem</Outline>
                        <Spacer />
                        <IconRow>
                            <IconButton aria-label="Aç"><Icon size={15}>{icons.chevronUp}</Icon></IconButton>
                            <IconButton $size={16} aria-label="Büyüt"><Icon size={16}>{icons.expand}</Icon></IconButton>
                        </IconRow>
                    </Bar>
                </ChartColumn>

                <Watchlist />

                <Rail $right>
                    <RightTool name="list" look="dark" />
                    <RightTool name="alarm" badge="25" />
                    <RightTool name="layers" />
                    <RightTool name="chat" />
                    <Spacer />
                    <RightTool name="calendar" />
                    <RightTool name="bell" />
                    <RightTool name="apps" look="light" round />
                    <RailLine $tight />
                    <RightTool name="help" />
                </Rail>
            </Body>
        </Page>
    )
}

export default App
